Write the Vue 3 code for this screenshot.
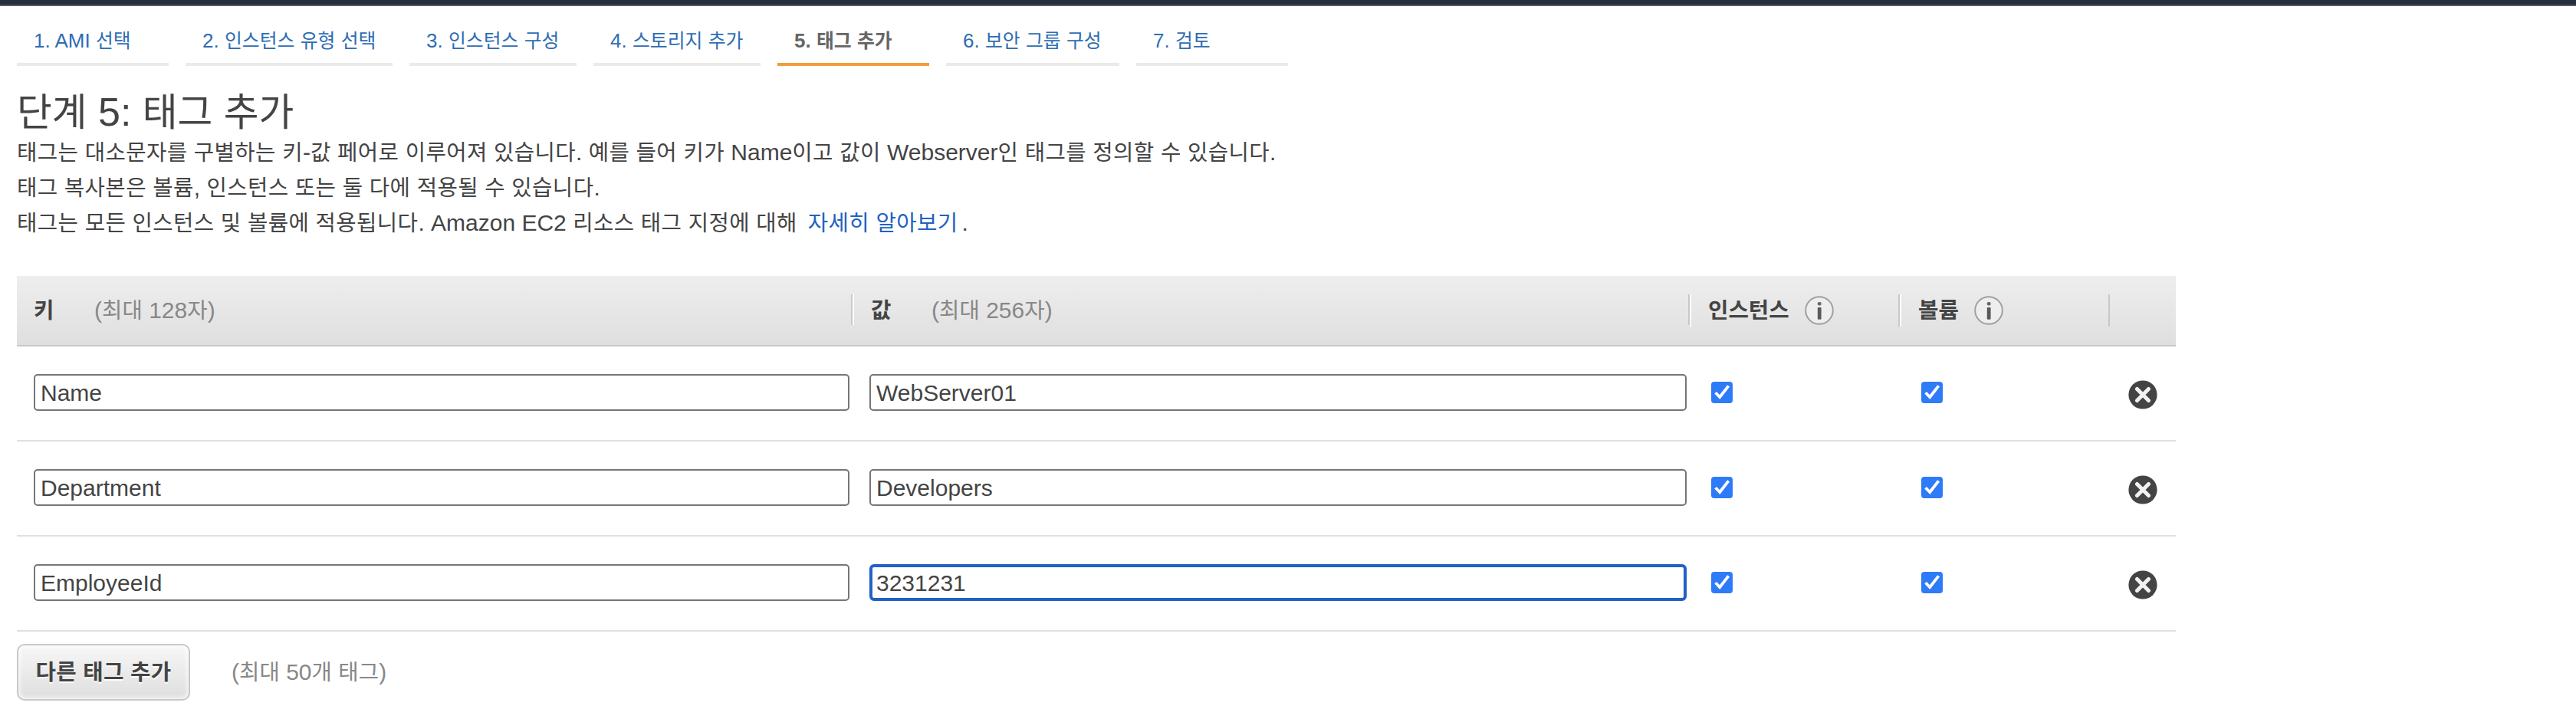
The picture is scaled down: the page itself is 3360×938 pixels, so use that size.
<script setup>
import { h, ref } from 'vue'

// Splits a label into Hangul and Latin runs so each script keeps its own metrics.
const Mixed = (props) =>
  h(
    'span',
    props.text
      .split(/([\u3131-\uD79D]+)/)
      .filter(Boolean)
      .map((run) => (/[\u3131-\uD79D]/.test(run) ? h('span', { class: 'ko' }, run) : run))
  )
Mixed.props = ['text']

const steps = [
  { label: '1. AMI 선택', size: 'w198' },
  { label: '2. 인스턴스 유형 선택', size: 'w270' },
  { label: '3. 인스턴스 구성', size: 'w218' },
  { label: '4. 스토리지 추가', size: 'w218' },
  { label: '5. 태그 추가', size: 'w198', active: true },
  { label: '6. 보안 그룹 구성', size: 'w226' },
  { label: '7. 검토', size: 'w198' }
]

const tags = ref([
  { key: 'Name', value: 'WebServer01' },
  { key: 'Department', value: 'Developers' },
  { key: 'EmployeeId', value: '3231231', focused: true }
])
</script>

<template>
  <div class="page">
    <div class="topbar"></div>
    <nav class="steps">
      <a v-for="s in steps" :key="s.label" class="step" :class="[s.size, { active: s.active }]"><Mixed :text="s.label" /></a>
    </nav>
    <h1><Mixed text="단계 5: 태그 추가" /></h1>
    <div class="intro">
      <p><Mixed text="태그는 대소문자를 구별하는 키-값 페어로 이루어져 있습니다. 예를 들어 키가 Name이고 값이 Webserver인 태그를 정의할 수 있습니다." /></p>
      <p><Mixed text="태그 복사본은 볼륨, 인스턴스 또는 둘 다에 적용될 수 있습니다." /></p>
      <p><Mixed text="태그는 모든 인스턴스 및 볼륨에 적용됩니다. Amazon EC2 리소스 태그 지정에 대해" /><a class="link"><Mixed text="자세히 알아보기" /></a>.</p>
    </div>

    <div class="table">
      <div class="row head">
        <div class="cell short"><b class="name"><Mixed text="키" /></b><span class="hint"><Mixed text="(최대 128자)" /></span></div>
        <div class="cell short lead"><b class="name"><Mixed text="값" /></b><span class="hint"><Mixed text="(최대 256자)" /></span></div>
        <div v-for="n in ['인스턴스', '볼륨']" :key="n" class="cell lead">
          <b><Mixed :text="n" /></b>
          <svg class="info" viewBox="0 0 38 38">
            <circle cx="19" cy="19" r="17.8" fill="#eee" stroke="#a0a0a0" stroke-width="2" />
            <rect x="16.8" y="8" width="4.8" height="4.4" rx="1.6" fill="#6a6a6a" />
            <rect x="16.8" y="15" width="4.8" height="15.8" rx="1.2" fill="#5a5a5a" />
          </svg>
        </div>
        <div class="cell last"></div>
      </div>
      <div v-for="t in tags" :key="t.key" class="row body">
        <div class="field"><input v-model="t.key" type="text" /></div>
        <div class="field"><input v-model="t.value" type="text" :class="{ focused: t.focused }" /></div>
        <div v-for="c in 2" :key="c" class="check">
          <svg viewBox="0 0 28 28">
            <rect width="28" height="28" rx="4" fill="#2e7bf8" />
            <path d="M5.6 14.2 L11.2 20 L22.6 5.4" fill="none" stroke="#fff" stroke-width="3.8" />
          </svg>
        </div>
        <div class="remove">
          <svg viewBox="0 0 38 38">
            <circle cx="19" cy="19" r="18.6" fill="#444" />
            <path d="M11.5 11.5 L26.5 26.5 M26.5 11.5 L11.5 26.5" stroke="#f2f2f2" stroke-width="5" stroke-linecap="round" />
          </svg>
        </div>
      </div>
    </div>

    <div class="footer">
      <button type="button"><Mixed text="다른 태그 추가" /></button>
      <span class="hint"><Mixed text="(최대 50개 태그)" /></span>
    </div>
  </div>
</template>

<style>
body {
  background: #fff;
}
.ko {
  font-size: 0.957em;
  line-height: 1;
}
.intro .ko,
.footer button .ko {
  letter-spacing: 0.35px;
}
</style>

<style scoped>
.page {
  box-sizing: border-box;
  width: 3360px;
  height: 938px;
  overflow: hidden;
  background: #fff;
  color: #444;
  font: 30px/46px "Liberation Sans", "Noto Sans CJK KR", sans-serif;
  white-space: nowrap;
}
.topbar {
  box-sizing: border-box;
  height: 8px;
  background: #262f3e;
  border-bottom: 2px solid #545b67;
}
.steps {
  display: flex;
  gap: 22px;
  padding: 24px 22px 0;
}
.step {
  box-sizing: border-box;
  height: 54px;
  padding: 0 0 0 22px;
  border-bottom: 4px solid #eaeaea;
  color: #2e6db4;
  font-size: 26px;
  line-height: 42px;
}
.step.active {
  border-color: #f19d38;
  color: #666;
  font-weight: bold;
}
.w198 { width: 198px; }
.w218 { width: 218px; }
.w226 { width: 226px; }
.w270 { width: 270px; }
h1 {
  height: 62px;
  margin: 28px 0 0 22px;
  font-size: 52px;
  font-weight: normal;
  line-height: 64px;
}
.intro {
  margin: 0 0 0 22px;
}
.intro p {
  margin: 0;
  height: 46px;
}
.link {
  margin: 0 5px 0 14px;
  color: #2162bf;
}
.table {
  width: 2816px;
  margin: 46px 0 0 22px;
}
.row {
  display: grid;
  grid-template-columns: 1090px 1092px 274px 274px 86px;
}
.head {
  box-sizing: border-box;
  height: 92px;
  padding-top: 24px;
  align-items: start;
  border-bottom: 2px solid #c8c8c8;
  background: linear-gradient(#eee, #dfdfdf);
}
.cell {
  box-sizing: border-box;
  display: flex;
  align-items: center;
  height: 42px;
  padding-left: 22px;
  border-right: 2px solid #c8c8c8;
}
.cell.short {
  height: 40px;
  padding-top: 2px;
}
.cell.lead {
  border-left: 2px solid #fff;
}
.cell.last {
  border: 0;
}
.name {
  width: 79px;
}
.hint {
  color: #888;
}
.info {
  width: 38px;
  height: 38px;
  margin-left: 20px;
}
.body {
  box-sizing: border-box;
  height: 124px;
  align-items: start;
  border-bottom: 2px solid #e0e0e0;
}
.field {
  display: flex;
  padding: 36px 4px 0 22px;
}
input {
  box-sizing: border-box;
  flex: 1;
  height: 48px;
  margin: 0;
  padding: 2px 7px 0;
  border: 2px solid #767676;
  border-radius: 5px;
  outline: none;
  background: #fff;
  color: #444;
  font: inherit;
}
input.focused {
  padding: 2px 5px 0;
  border: 4px solid #2161c7;
  border-radius: 6px;
}
.check {
  padding: 46px 0 0 28px;
}
.check svg,
.remove svg {
  display: block;
  width: 28px;
  height: 28px;
}
.remove {
  padding: 44px 0 0 24px;
}
.remove svg {
  width: 38px;
  height: 38px;
}
.footer {
  display: flex;
  align-items: center;
  gap: 54px;
  margin: 16px 0 0 22px;
}
button {
  box-sizing: border-box;
  width: 226px;
  height: 74px;
  padding: 0;
  border: 2px solid #c8c8c8;
  border-radius: 10px;
  background: linear-gradient(#f7f7f7, #dedede);
  box-shadow: inset 0 0 6px 1px #fff;
  color: #444;
  font: bold 30px/46px "Liberation Sans", "Noto Sans CJK KR", sans-serif;
  text-shadow: 0 2px 0 #fff;
}
</style>
